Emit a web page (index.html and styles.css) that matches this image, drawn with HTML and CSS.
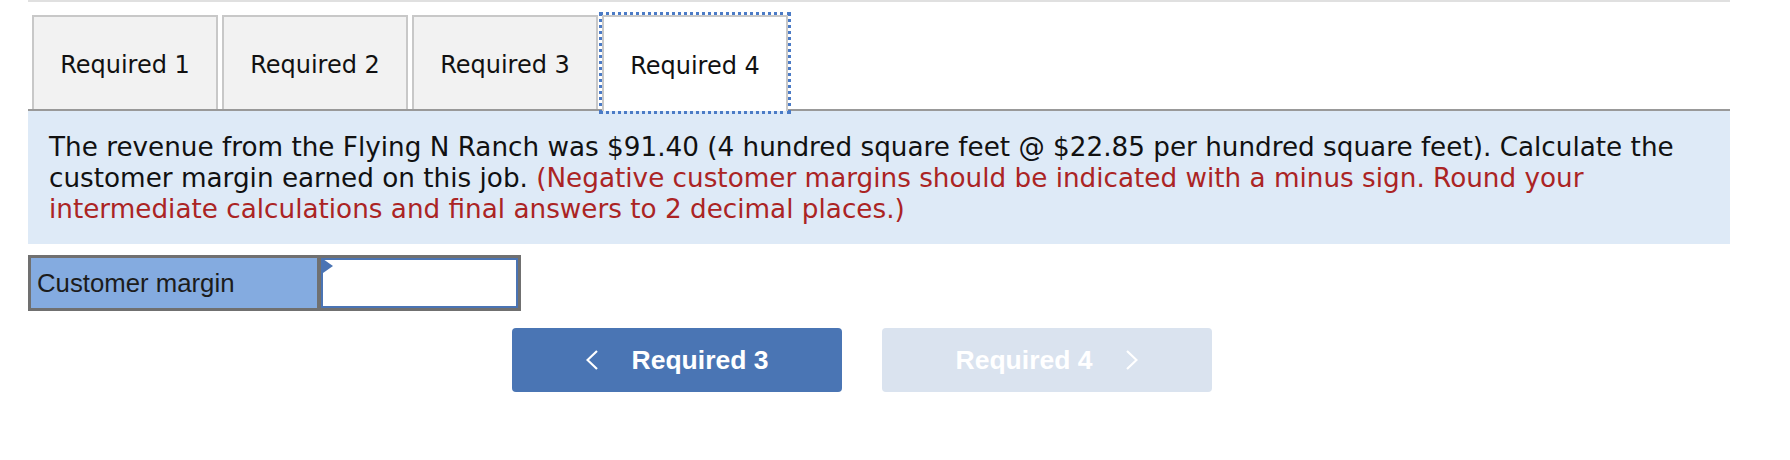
FILE: index.html
```html
<!DOCTYPE html>
<html lang="en">
<head>
<meta charset="utf-8">
<title>Required 4</title>
<link rel="stylesheet" href="styles.css">
</head>
<body>
<div class="page">
  <div class="topline"></div>
  <div class="tabs">
    <div class="tab">Required 1</div>
    <div class="tab">Required 2</div>
    <div class="tab">Required 3</div>
    <div class="tab active">Required 4</div>
  </div>
  <div class="panel">
    <p>The revenue from the Flying N Ranch was $91.40 (4 hundred square feet @ $22.85 per hundred square feet). Calculate the customer margin earned on this job. <span class="note">(Negative customer margins should be indicated with a minus sign. Round your intermediate calculations and final answers to 2 decimal places.)</span></p>
  </div>
  <div class="answer">
    <div class="label">Customer margin</div>
    <div class="input"><span class="marker"></span></div>
  </div>
  <div class="nav">
    <button class="btn prev"><svg class="chev" width="12" height="20" viewBox="0 0 12 20"><polyline points="11,1 1.5,10 11,19" fill="none" stroke="#fff" stroke-width="2.2"/></svg><span>Required 3</span></button>
    <button class="btn next"><span>Required 4</span><svg class="chev" width="12" height="20" viewBox="0 0 12 20"><polyline points="1,1 10.5,10 1,19" fill="none" stroke="#fff" stroke-width="2.2"/></svg></button>
  </div>
</div>
</body>
</html>
```
FILE: styles.css
```css
html, body {
  margin: 0;
  padding: 0;
  background: #ffffff;
}

.page {
  width: 1702px;
  padding-left: 28px;
}

.topline {
  height: 2px;
  background: #e0e0e0;
}

.tabs {
  display: flex;
  gap: 4px;
  padding-left: 4px;
  margin-top: 13px;
}

.tab {
  box-sizing: border-box;
  width: 186px;
  height: 94px;
  border: 2px solid #c8c8c8;
  border-bottom: none;
  background: #f2f2f2;
  display: flex;
  align-items: center;
  justify-content: center;
  font-family: "DejaVu Sans", Verdana, sans-serif;
  font-size: 24px;
  color: #111;
  padding-top: 4px;
}

.tab.active {
  background: #ffffff;
  height: 96px;
  margin-bottom: -2px;
  position: relative;
  z-index: 1;
  outline: 3px dotted #4b7bc6;
  outline-offset: 0;
}

.panel {
  border-top: 2px solid #999999;
  background: #deeaf7;
  padding: 21px 21px 19px;
}

.panel p {
  margin: 0;
  font-family: "DejaVu Sans", Verdana, sans-serif;
  font-size: 26.25px;
  line-height: 31px;
  color: #111;
}

.note {
  color: #ab2424;
}

.answer {
  margin-top: 11px;
  display: flex;
  width: fit-content;
  border: 3px solid #707070;
  height: 50px;
}

.label {
  width: 280px;
  padding-left: 6px;
  background: #84abe0;
  border-right: 4px solid #707070;
  display: flex;
  align-items: center;
  font-family: "Liberation Sans", Arial, sans-serif;
  font-size: 25.75px;
  color: #1c1c1c;
}

.input {
  box-sizing: border-box;
  width: 197px;
  border: 2px solid #4a74b4;
  background: #ffffff;
  position: relative;
}

.marker {
  position: absolute;
  left: 0;
  top: 0;
  width: 0;
  height: 0;
  border-top: 7px solid transparent;
  border-bottom: 7px solid transparent;
  border-left: 10px solid #4a74b4;
  margin-top: -1px;
}

.nav {
  margin-top: 17px;
  display: flex;
  gap: 40px;
  padding-left: 484px;
}

.btn {
  width: 330px;
  height: 64px;
  border: none;
  border-radius: 4px;
  display: flex;
  align-items: center;
  justify-content: center;
  gap: 34px;
  font-family: "Liberation Sans", Arial, sans-serif;
  font-weight: bold;
  font-size: 26.5px;
  color: #ffffff;
  padding: 0;
}

.btn.prev {
  background: #4a75b4;
}

.btn.next {
  background: #dae3ef;
}

.chev {
  display: block;
}
```
